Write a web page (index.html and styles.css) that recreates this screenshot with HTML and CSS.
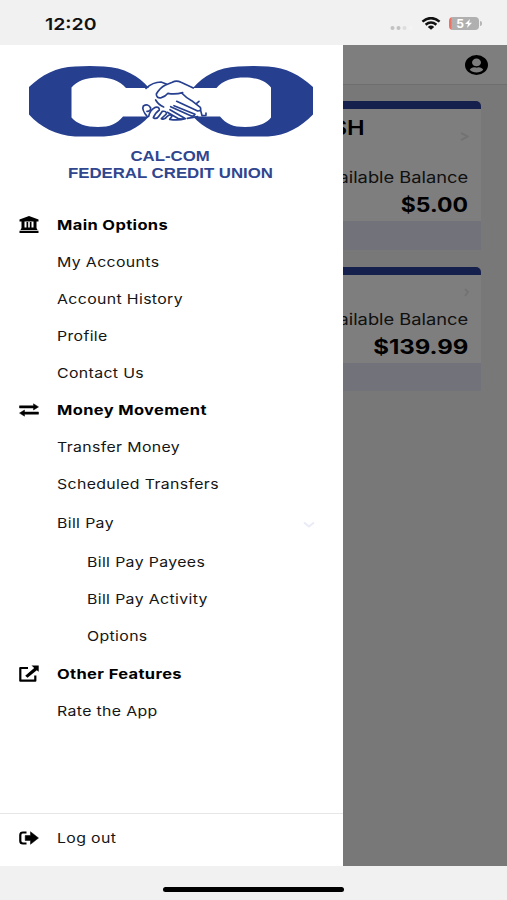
FILE: index.html
```
<!DOCTYPE html>
<html lang="en">

<head>
  <meta charset="UTF-8">
  <meta name="viewport" content="width=device-width, initial-scale=1.0">
  <title>Cal-Com Federal Credit Union</title>
  <link rel="stylesheet" href="styles.css">
</head>

<body>
  <header class="status">
    <span class="time">12:20</span>
    <div class="status-icons">
      <svg class="signal" width="24" height="6" viewBox="0 0 24 6">
        <circle cx="2.5" cy="3" r="2" fill="#c2c2c2" />
        <circle cx="8.5" cy="3" r="2" fill="#c2c2c2" />
        <circle cx="14.5" cy="3" r="2" fill="#dddddd" />
        <circle cx="20.5" cy="3" r="2" fill="#f4f4f4" />
      </svg>
      <svg class="wifi" width="20" height="13" viewBox="0 0 20 13">
        <path d="M1.4 4.6Q10-2.4 18.6 4.6M4.6 7.7Q10 3.4 15.4 7.7" fill="none" stroke="#111" stroke-width="2.5" />
        <path d="M6.8 9.9Q10 7.2 13.2 9.9L10 12.8Z" fill="#111" />
      </svg>
      <div class="battery"><b>5</b><svg width="7" height="9" viewBox="0 0 7 9"><path d="M5 0L0 5h3L2 9l5-5.200H4z" fill="#fff" /></svg></div>
    </div>
  </header>

  <main class="screen">
    <div class="topbar">
      <svg width="23" height="20" viewBox="0 0 496 496" preserveAspectRatio="none">
        <path d="M248 0a248 248 0 1 0 0 496 248 248 0 0 0 0-496zm0 88a96 96 0 1 1 0 192 96 96 0 0 1 0-192zm0 344c-59 0-111-27-145-68 18-34 54-58 95-58 6 0 26 10 50 10s44-10 50-10c41 0 77 24 95 58-34 41-86 68-145 68z" />
      </svg>
    </div>
    <div class="accounts">
      <section class="card">
        <div class="card-head"><h2>SH</h2><svg class="arrow" width="9" height="11" viewBox="0 0 9 11"><path d="M1 2l7 3.500-7 3.500" /></svg></div>
        <div class="card-label"><span>Available Balance</span></div>
        <div class="card-amount"><span>$5.00</span></div>
        <div class="card-foot"></div>
      </section>
      <section class="card small">
        <div class="card-head"><svg class="arrow" width="5" height="9" viewBox="0 0 5 9"><path d="M1 1l3 3-3 4" /></svg></div>
        <div class="card-label"><span>Available Balance</span></div>
        <div class="card-amount"><span>$139.99</span></div>
        <div class="card-foot"></div>
      </section>
    </div>

    <div class="overlay"></div>

    <nav class="drawer">
      <div class="brand">
        <svg class="logo" width="286" height="72" viewBox="28 65 286 72">
          <g fill="#263f8f">
            <path d="M29 87C42 75 56 67 75 66.500Q90 65.500 104 66.500C124 67.500 139 76 149 88H126C119 80 110 77.500 98 77.500S77 81 71.500 87.500V117.500C77 124 86 127 98 127S117 124 123 116.500H149C139 128 124 135.500 104 136.500H75C56 135 40 127 29 114.500Z" />
            <path d="M313 87C300 75 286 67.500 268 66.500Q253 65.500 238 66.500C218 67.500 203 76 193 88H216.500C223 80 233 77.500 245 77.500S266 81 271 87.500V117.500C266 124 257 127 245 127S226 124 220 116.500H193C203 128 218 135.500 238 136.500H268C286 135.500 301 127 313 114.500Z" />
          </g>
          <!-- handshake -->
          <g transform="translate(130 70) scale(.3333)" fill="none" stroke="#263f8f" stroke-width="5" stroke-linecap="round" stroke-linejoin="round">
            <path d="M48 55Q68 36 93 36L109 42" />
            <path d="M190 54L153 37Q139 30 127 37L105 46Q90 54 79 72Q79 86 94 83Q106 80 114 70Q135 74 158 68" />
            <path d="M155 69Q169 84 185 92L211 112Q216 123 203 123L140 94" />
            <path d="M200 100L207 94M132 107L195 133Q190 142 179 136L122 110M120 119L163 144Q157 150 143 145L112 127" />
            <path d="M52 140Q34 119 40 108Q54 99 62 114Q62 125 51 124" />
            <path d="M56 139Q60 120 76 112Q88 109 88 120Q77 127 70 143Q80 149 87 138L97 124Q110 122 109 132L94 146Q104 151 112 139Q121 130 126 139L119 148Q145 152 166 146" />
            <path d="M77 90Q86 105 101 111M212 121L216 137L228 136V129M172 145L203 140" />
          </g>
        </svg>
        <div class="brand-name"><span>CAL-COM</span></div>
        <div class="brand-name"><span>FEDERAL CREDIT UNION</span></div>
      </div>

      <ul class="menu">
        <li class="title">
          <svg width="20" height="17" viewBox="0 0 20 17"><path d="M10 0L19.500 3.500V5.500H.5V3.500ZM2.500 5H5.500V11.500H7.500V6H9.200V11.500H10.800V6H12.500V11.500H14.500V5H17.500V12L18.500 14H1.500L2.500 12zM.5 14.800h19V17H.5z" /></svg>
          <span>Main Options</span>
        </li>
        <li><span>My Accounts</span></li>
        <li><span>Account History</span></li>
        <li><span>Profile</span></li>
        <li><span>Contact Us</span></li>
        <li class="title">
          <svg width="20" height="14" viewBox="0 0 20 14"><path d="M.5 2.800H14.500V.8L19.500 3.900 14.500 7V5H.5zM19.500 9H5.500V7L.5 10.100 5.500 13.200V11.200H19.500z" stroke="#000" stroke-width=".5" stroke-linejoin="round" /></svg>
          <span>Money Movement</span>
        </li>
        <li><span>Transfer Money</span></li>
        <li><span>Scheduled Transfers</span></li>
        <li class="group">
          <span>Bill Pay</span>
          <svg class="chevron" width="12" height="8" viewBox="0 0 12 8"><path d="M1 1.500l5 4 5-4" /></svg>
        </li>
        <li class="sub"><span>Bill Pay Payees</span></li>
        <li class="sub"><span>Bill Pay Activity</span></li>
        <li class="sub"><span>Options</span></li>
        <li class="title">
          <svg width="20" height="17" viewBox="0 0 20 17"><path d="M9 3H1.300V15.700H16.300V10.500" fill="none" stroke="#000" stroke-width="2.2" stroke-linejoin="round" /><path d="M12.500.5H19.700V6.700L17.800 5.200 8.500 12.700 6.200 10.700 15.200 3z" /></svg>
          <span>Other Features</span>
        </li>
        <li><span>Rate the App</span></li>
      </ul>

      <div class="logout">
        <svg width="20" height="14" viewBox="0 0 20 14"><path d="M7.500 1.500H4Q1.300 1.500 1.300 4V10Q1.300 12.500 4 12.500H7.500" fill="none" stroke="#000" stroke-width="2.2" /><path d="M6.200 4.500H11.500V.7L19.500 7 11.500 13.300V9.500H6.200z" stroke="#000" stroke-width=".5" stroke-linejoin="round" /></svg>
        <span>Log out</span>
      </div>
    </nav>
  </main>

  <footer class="home"><div class="home-bar"></div></footer>
</body>

</html>
```
FILE: styles.css
```
* {
  box-sizing: border-box;
}

body {
  margin: 0;
  width: 507px;
  height: 900px;
  display: flex;
  flex-direction: column;
  overflow: hidden;
  background: #f1f1f1;
  font-family: Inter, "Liberation Sans", sans-serif;
  color: #000;
}

svg {
  display: block;
  flex: none;
}

span,
h2 {
  white-space: nowrap;
}

/* status bar */
.status {
  height: 45px;
  flex: none;
  display: flex;
  justify-content: space-between;
  align-items: center;
  padding: 2px 28px 0 45px;
}

.time {
  font-size: 16.5px;
  font-weight: 600;
  color: #111;
  transform: scaleX(1.18);
  transform-origin: left;
}

.status-icons {
  display: flex;
  align-items: center;
}

.signal {
  margin: 8px 7px 0 0;
}

.wifi {
  margin-right: 8px;
}

.battery {
  width: 30px;
  height: 13px;
  display: flex;
  justify-content: center;
  align-items: center;
  gap: 1px;
  border-radius: 4px;
  background: linear-gradient(to right, #ee7163 2px, #b0b0b0 3px);
  color: #fff;
  font-size: 12px;
  position: relative;
}

.battery::after {
  content: '';
  position: absolute;
  right: -3px;
  top: 4px;
  width: 2px;
  height: 5px;
  border-radius: 0 2px 2px 0;
  background: #b5b5b5;
}

/* accounts page */
.screen {
  height: 821px;
  flex: none;
  position: relative;
  background: #f1f1f1;
}

.topbar {
  height: 40px;
  display: flex;
  justify-content: flex-end;
  align-items: center;
  padding-right: 19px;
  background: #fcfcfc;
  border-bottom: 1px solid #dcdcdc;
}

.accounts {
  padding: 16px 26px 0;
}

.card {
  height: 149px;
  margin-bottom: 17px;
  display: flex;
  flex-direction: column;
  border-top: 8px solid #2c4098;
  border-radius: 5px 5px 0 0;
  background: #fdfdfd;
}

.card-head {
  height: 54px;
  display: flex;
  justify-content: flex-end;
  align-items: flex-start;
  padding-right: 12px;
}

.card-head h2 {
  margin: 6px 95px 0 0;
  font-size: 20.5px;
  line-height: 26px;
  font-weight: 600;
  transform: scaleX(1.15);
  transform-origin: right;
}

.arrow {
  margin-top: 22px;
}

.arrow path {
  fill: none;
  stroke: #e6e6e8;
  stroke-width: 2;
}

.card-label,
.card-amount {
  height: 28px;
  display: flex;
  justify-content: flex-end;
  align-items: center;
  padding-right: 13px;
}

.card-label span {
  font-size: 15.5px;
  color: #222;
  transform: scaleX(1.18);
  transform-origin: right;
}

.card-amount span {
  font-size: 19.5px;
  font-weight: 700;
  transform: scaleX(1.18);
  transform-origin: right;
}

.card-foot {
  height: 29px;
  margin-top: auto;
  background: #e4e5f5;
}

.small {
  height: 124px;
}

.small .card-head {
  height: 30px;
}

.small .arrow {
  margin-top: 13px;
}

.small .card-amount span {
  transform: scaleX(1.23);
}

.small .card-foot {
  height: 28px;
}

.overlay {
  position: absolute;
  inset: 0;
  background: rgba(0, 0, 0, 0.5);
}

/* side menu */
.drawer {
  position: absolute;
  top: 0;
  left: 0;
  width: 343px;
  height: 821px;
  display: flex;
  flex-direction: column;
  background: #fff;
}

.brand {
  height: 161px;
  padding-top: 20px;
  color: #30468f;
}

.logo {
  margin: 0 0 11px 28px;
}

.brand-name {
  height: 16.5px;
  display: flex;
  justify-content: center;
  align-items: center;
  padding-right: 2px;
  font-family: "Liberation Sans", sans-serif;
  font-size: 14px;
  font-weight: 700;
}

.brand-name span {
  transform: scaleX(1.2);
}

.menu {
  list-style: none;
  margin: 0;
  padding: 0;
  flex: 1;
}

.menu li,
.logout {
  height: 37.1px;
  display: flex;
  align-items: center;
  padding-left: 57px;
  font-size: 13.5px;
  color: #151515;
}

.menu span,
.logout span {
  letter-spacing: 0.3px;
  transform: scaleX(1.175);
  transform-origin: left;
}

.menu .title,
.logout {
  padding-left: 19px;
  gap: 18px;
}

.menu .title {
  font-weight: 700;
  color: #000;
}

.menu .title span {
  transform: scaleX(1.22);
}

.menu .group {
  height: 41px;
  justify-content: space-between;
  padding-right: 28px;
}

.menu .sub {
  padding-left: 86.5px;
}

.chevron {
  margin-top: 4px;
}

.chevron path {
  fill: none;
  stroke: #e9ebf7;
  stroke-width: 2;
}

.logout {
  height: 53px;
  padding-bottom: 5px;
  border-top: 1px solid #e6e6e6;
}

/* home indicator */
.home {
  flex: 1;
  display: flex;
  justify-content: center;
  padding-top: 21px;
}

.home-bar {
  width: 181px;
  height: 5px;
  border-radius: 3px;
  background: #000;
}
```
